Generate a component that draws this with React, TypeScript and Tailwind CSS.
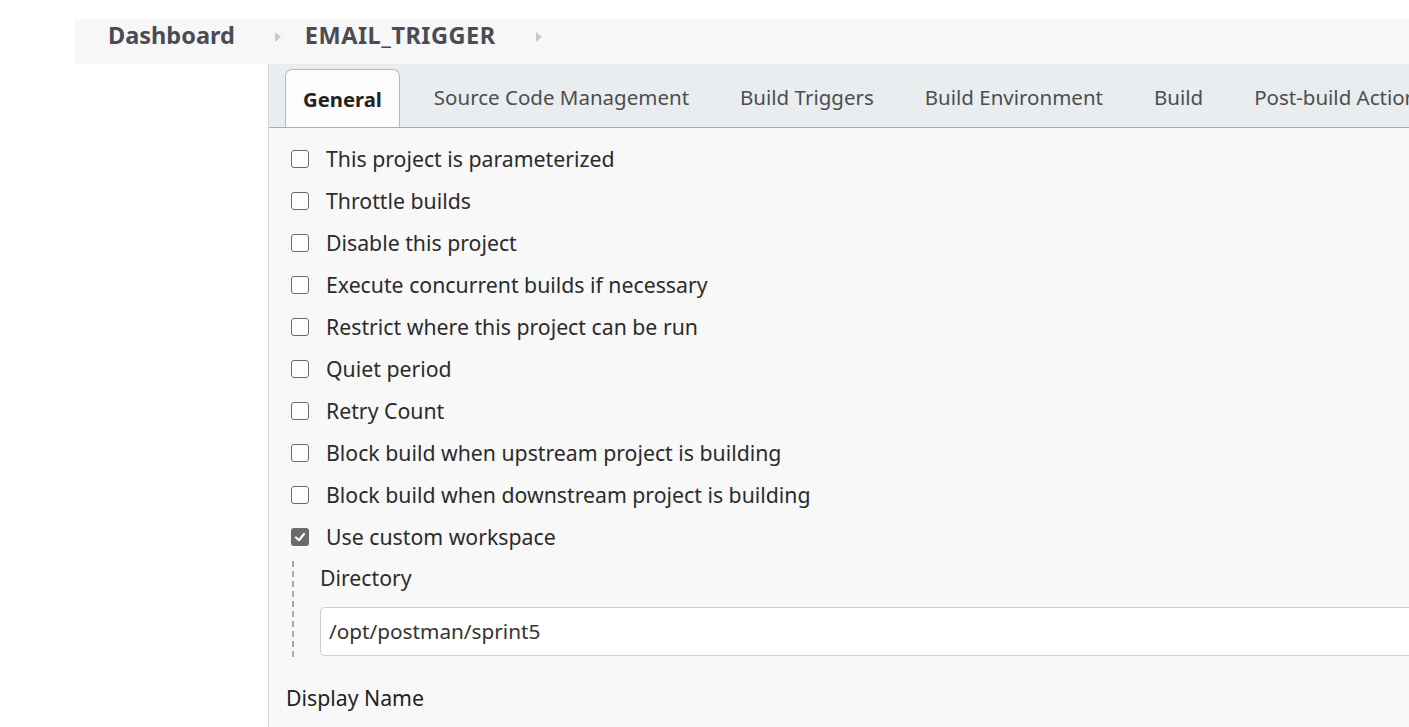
import React from 'react';

const options: { label: string; checked?: boolean }[] = [
  { label: 'This project is parameterized' },
  { label: 'Throttle builds' },
  { label: 'Disable this project' },
  { label: 'Execute concurrent builds if necessary' },
  { label: 'Restrict where this project can be run' },
  { label: 'Quiet period' },
  { label: 'Retry Count' },
  { label: 'Block build when upstream project is building' },
  { label: 'Block build when downstream project is building' },
  { label: 'Use custom workspace', checked: true },
];

const tabs = ['General', 'Source Code Management', 'Build Triggers', 'Build Environment', 'Build', 'Post-build Actions'];

const Chevron: React.FC = () => (
  <svg width="8" height="12" viewBox="0 0 8 12" className="ml-[39px] mr-[23px] mt-[10px] shrink-0">
    <path d="M1 1 L7 6 L1 11 Z" fill="#c8c8c8" />
  </svg>
);

const Checkbox: React.FC<{ checked?: boolean }> = ({ checked }) =>
  checked ? (
    <span className="w-[18px] h-[18px] rounded-[3px] bg-[#6b6b6b] flex items-center justify-center shrink-0">
      <svg width="12" height="12" viewBox="0 0 12 12">
        <path d="M2 6.5 L5 9.2 L10 3" stroke="#fff" strokeWidth="2.2" fill="none" strokeLinecap="round" strokeLinejoin="round" />
      </svg>
    </span>
  ) : (
    <span className="w-[18px] h-[18px] rounded-[3px] border-[1.5px] border-[#6b6b6b] bg-white shrink-0" />
  );

export default function App() {
  return (
    <div
      className="w-[1409px] h-[727px] overflow-hidden bg-white text-[#333]"
      style={{ fontFamily: '"Noto Sans", "Open Sans", sans-serif' }}
    >
      <div className="pt-[19px] pl-[75px]">
        <div className="h-[45px] bg-[#f7f7f7] flex items-start pt-[2px] pl-[33px] text-[23.5px] leading-[28px] font-bold text-[#4b4b55]">
          <span>Dashboard</span>
          <Chevron />
          <span className="tracking-[0.5px]">EMAIL_TRIGGER</span>
          <Chevron />
        </div>
      </div>

      <div className="ml-[268px] h-[663px] border-l border-[#d6d6d6] bg-[#f8f8f8]">
        <div className="h-[64px] bg-[#e9edf0] border-b border-[#a9aeb3] flex items-end gap-[17px] pl-[16px] whitespace-nowrap overflow-hidden">
          {tabs.map((t, i) =>
            i === 0 ? (
              <div
                key={t}
                className="h-[59px] px-[17px] flex items-center bg-[#fcfcfc] border border-b-0 border-[#b5babf] rounded-t-[7px] font-bold text-[20.25px] text-[#222] mb-[-1px] shrink-0"
              >
                {t}
              </div>
            ) : (
              <div key={t} className="h-[59px] px-[17px] flex items-center text-[20.5px] text-[#4d4d4d] shrink-0">
                {t}
              </div>
            )
          )}
        </div>

        <div className="pt-[10px] pl-[22px]">
          {options.map((o) => (
            <div key={o.label} className="h-[42px] flex items-center gap-[17px]">
              <Checkbox checked={o.checked} />
              <span className="text-[21.25px] text-[#2b2b2b]">{o.label}</span>
            </div>
          ))}

          <div className="mt-[3px] ml-[1px] border-l-2 border-dashed border-[#a8a8a8] pl-[26px] pt-[2px] pb-[1px]">
            <div className="h-[30px] flex items-center text-[21.25px] text-[#2b2b2b]">Directory</div>
            <div className="mt-[14px] h-[49px] bg-white border border-[#cfcfcf] rounded-l-[5px] border-r-0 flex items-center pl-[8px] text-[20.75px] text-[#333]">
              /opt/postman/sprint5
            </div>
          </div>
        </div>

        <div className="pl-[17px] mt-[25px] text-[21.25px] text-[#222]">Display Name</div>
      </div>
    </div>
  );
}
